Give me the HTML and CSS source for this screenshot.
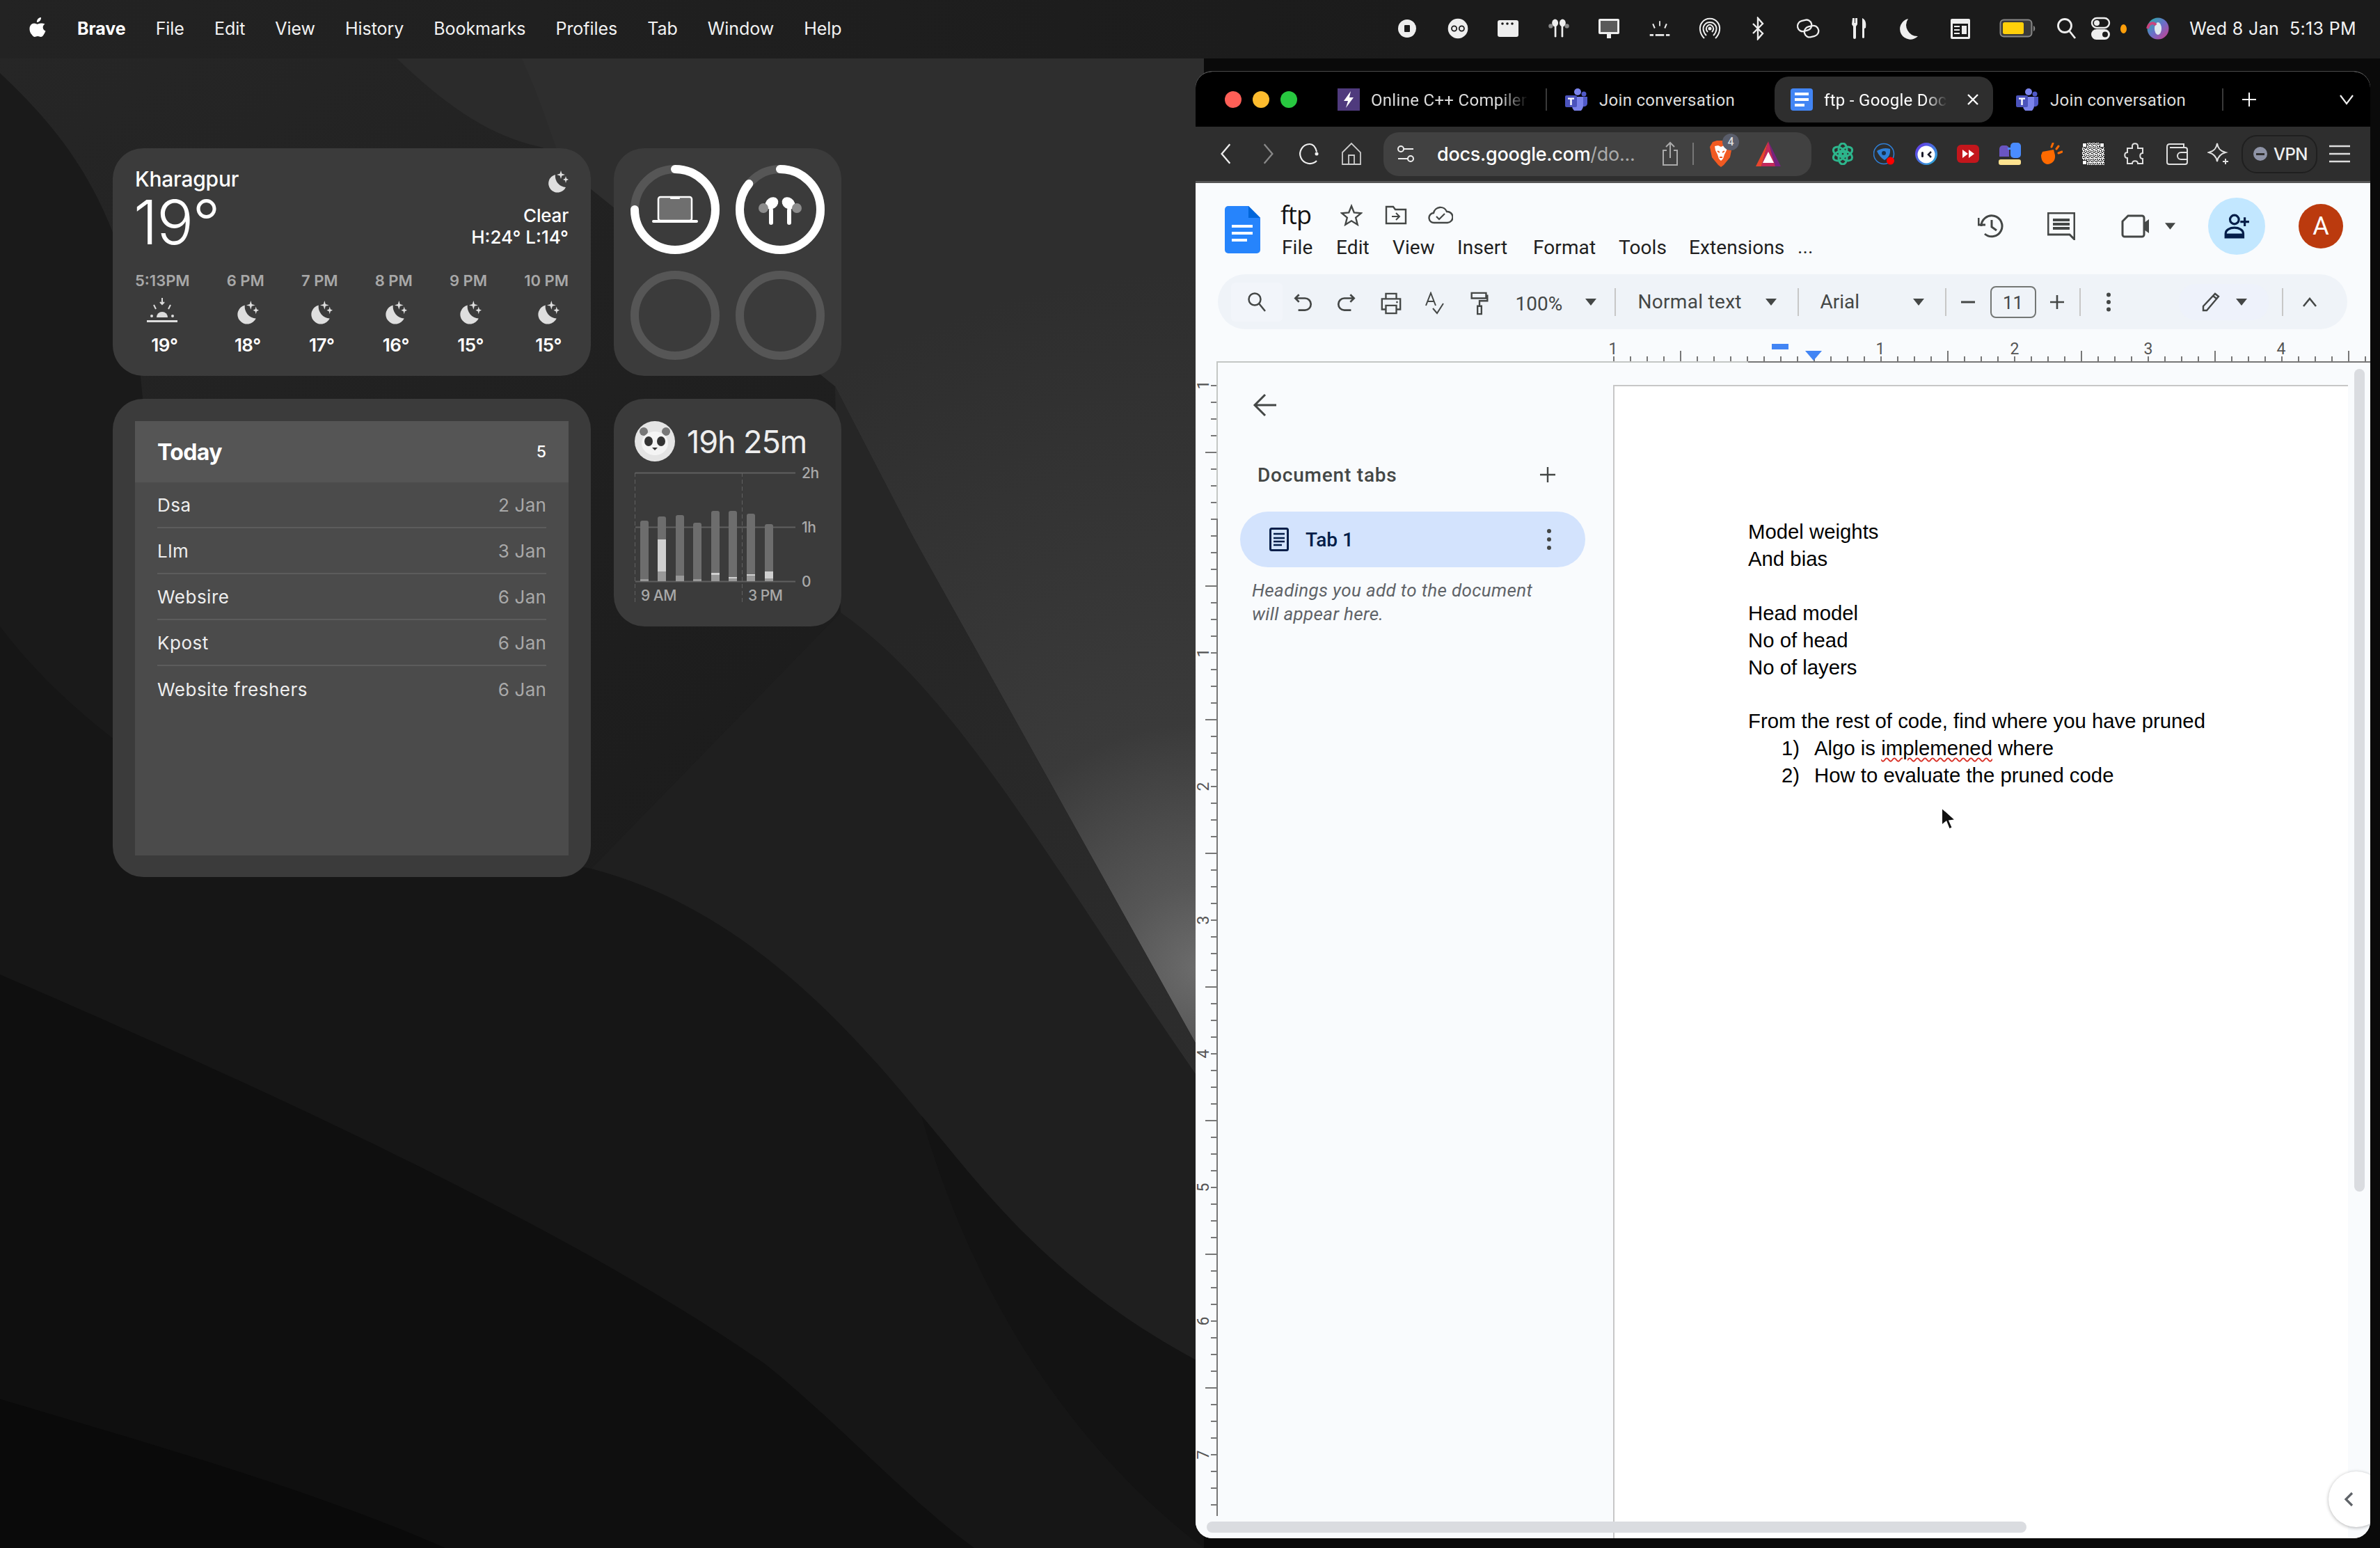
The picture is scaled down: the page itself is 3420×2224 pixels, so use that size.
FILE: index.html
```html
<!DOCTYPE html>
<html lang="en">
<head>
<meta charset="utf-8">
<title>Desktop</title>
<link rel="stylesheet" href="styles.css">
</head>
<body>
<svg class="defs" aria-hidden="true">
  <defs>
    <symbol id="moon" viewBox="0 0 32 32"><path d="M13 6A13 13 0 1 0 28 24 16 16 0 0 1 13 6Z" fill="#dedede"/><path d="M21 0l1.400 4.600L27 6l-4.600 1.400L21 12l-1.400-4.600L15 6l4.600-1.400zM28 8l1 3.500L32 13l-3 1.300L28 18l-1-3.700L24 13l3-1.500z" fill="#dedede"/></symbol>
    <symbol id="teams" viewBox="0 0 32 32"><circle cx="18" cy="5" r="5" fill="#7b83eb"/><circle cx="27" cy="8" r="3.500" fill="#5059c9"/><path d="M23 12h9v10a5 5 0 0 1-9 2z" fill="#5059c9"/><path d="M9 12h17v13a8 8 0 0 1-16 1z" fill="#7b83eb"/><rect y="10" width="17" height="17" rx="2" fill="#4b53bc"/><path d="M4 13.500h9v2.200h-3.300V24H7.300v-8.300H4z" fill="#fff"/></symbol>
    <symbol id="gdoc" viewBox="0 0 32 32"><rect width="32" height="32" rx="4" fill="#4285f4"/><path d="M6 6h20v4H6zM6 14h20v4H6zM6 22h14v4H6z" fill="#fff"/></symbol>
    <symbol id="arrowdn" viewBox="0 0 18 12"><path d="M1 1h16l-8 10z" fill="#444746"/></symbol>
  </defs>
</svg>
<div class="desktop">
  <svg class="wallpaper" viewBox="0 0 3420 2224" aria-hidden="true">
    <defs>
      <radialGradient id="glow" gradientUnits="userSpaceOnUse" cx="1725" cy="1390" r="1000"><stop offset="0" stop-color="#6c6c6c"/><stop offset=".12" stop-color="#565656"/><stop offset=".35" stop-color="#3a3a3a"/><stop offset="1" stop-color="#2e2e2e"/></radialGradient>
      <linearGradient id="mid" gradientUnits="userSpaceOnUse" x1="1300" y1="900" x2="1700" y2="1700"><stop offset="0" stop-color="#262626"/><stop offset="1" stop-color="#2e2e2e"/></linearGradient>
      <linearGradient id="upper" gradientUnits="userSpaceOnUse" x1="0" y1="84" x2="900" y2="1300"><stop offset="0" stop-color="#262626"/><stop offset="1" stop-color="#1c1c1c"/></linearGradient>
    </defs>
    <rect width="3420" height="2224" fill="#161616"/>
    <path d="M0 84H1730V1960C1500 1840 1400 1690 1324 1603 1200 1450 1050 1300 850 1248 600 1200 300 1100 0 900Z" fill="url(#upper)"/>
    <path d="M0 105C90 190 150 270 190 420L260 1130C150 1060 60 980 0 900Z" fill="#1a1a1a"/>
    <path d="M570 84C640 150 700 195 780 212L1230 560 1730 1000V84Z" fill="#2b2b2b"/>
    <path d="M750 84C780 150 790 190 810 240L1200 555 1313 773 1730 1520V84Z" fill="url(#glow)"/>
    <path d="M1208 880C1380 1000 1520 1260 1730 1560V1960C1500 1840 1400 1690 1324 1603 1200 1450 1050 1300 850 1248Z" fill="#1f1f1f"/>
    <path d="M1200 555L1313 773 1730 1520V1560C1520 1260 1380 1000 1208 880Z" fill="url(#mid)"/>
    <path d="M0 1400C300 1530 800 1750 1100 1960 1200 2040 1300 2150 1400 2224H0Z" fill="#0f0f0f"/>
    <path d="M0 2010C200 2070 450 2140 640 2224H0Z" fill="#0a0a0a"/>
    <path d="M1730 1960C1500 1840 1400 1690 1324 1603 1380 1800 1500 2050 1730 2224Z" fill="#131313"/>
    <rect x="1730" y="84" width="1690" height="2140" fill="#0a0a0a"/>
  </svg>

  <header class="menubar">
    <div class="menu-left">
      <svg class="apple" viewBox="0 0 24 30" aria-hidden="true"><path d="M17 1c.2 2-.6 3.700-1.700 5-1.100 1.200-2.800 2.100-4.400 2-.2-1.900.7-3.800 1.700-4.900C13.800 1.800 15.600.900 17 1zM22.500 10.600c-1.900 1.200-2.900 2.900-2.800 5 .1 2.400 1.500 4.100 3.800 5-.7 2-1.600 3.800-2.800 5.500-1.200 1.700-2.300 3-4.100 3-1.700 0-2.300-1-4.400-1-2 0-2.700 1-4.300 1-1.700 0-3-1.500-4.200-3.300C1.500 23.400.300 20 .500 16.900c.2-4.300 3-7.300 6.600-7.400 1.900 0 3.300 1.200 4.600 1.200 1.200 0 2.900-1.400 5.200-1.200 2.200.1 4.200 0 5.600 1.100z" fill="#fff"/></svg>
      <strong class="menu-app">Brave</strong>
      <span>File</span><span>Edit</span><span>View</span><span>History</span><span>Bookmarks</span><span>Profiles</span><span>Tab</span><span>Window</span><span>Help</span>
    </div>
    <div class="menu-right">
      <svg class="st" viewBox="0 0 34 34" aria-hidden="true"><circle cx="17" cy="17" r="13" fill="#eee"/><rect x="13" y="12" width="8" height="10" rx="1" fill="#1b1b1b"/></svg>
      <svg class="st" viewBox="0 0 38 34" aria-hidden="true"><ellipse cx="19" cy="17" rx="16" ry="16" fill="#eee"/><circle cx="13" cy="17" r="4" fill="none" stroke="#1b1b1b" stroke-width="2"/><circle cx="25" cy="17" r="4" fill="none" stroke="#1b1b1b" stroke-width="2"/></svg>
      <svg class="st" viewBox="0 0 34 34" aria-hidden="true"><rect x="2" y="5" width="30" height="24" rx="3" fill="#eee"/><circle cx="9" cy="10" r="1.800" fill="#1b1b1b"/><circle cx="16" cy="10" r="1.800" fill="#1b1b1b"/><circle cx="23" cy="10" r="1.800" fill="#1b1b1b"/></svg>
      <svg class="st" viewBox="0 0 38 34" aria-hidden="true"><g fill="#eee"><ellipse cx="13" cy="8" rx="5" ry="6"/><ellipse cx="25" cy="8" rx="5" ry="6"/><rect x="12" y="12" width="3" height="19" rx="1.500"/><rect x="23" y="12" width="3" height="19" rx="1.500"/></g><circle cx="6" cy="13" r="3.500" fill="#888"/><circle cx="32" cy="13" r="3.500" fill="#888"/></svg>
      <svg class="st" viewBox="0 0 34 34" aria-hidden="true"><rect x="2" y="3" width="30" height="22" rx="2" fill="#eee"/><rect x="5" y="6" width="24" height="16" fill="#5a5a5a"/><rect x="14" y="25" width="6" height="6" fill="#eee"/></svg>
      <svg class="st" viewBox="0 0 38 34" aria-hidden="true"><g fill="#eee"><rect x="3" y="26" width="6" height="3"/><rect x="12" y="26" width="14" height="3"/><rect x="29" y="26" width="6" height="3"/><rect x="18" y="5" width="2" height="8"/><path d="M7 10l2-1 3 7-2 1zM31 10l-2-1-3 7 2 1z"/></g></svg>
      <svg class="st st-air" viewBox="0 0 34 34" fill="none" stroke="#eee" stroke-width="2" aria-hidden="true"><path d="M9 31C2 24 1 14 6 8c5-7 17-7 22 0 5 6 4 16-3 23"/><path d="M12 27C7 22 6 15 10 11c3-4 11-4 14 0 4 4 3 11-2 16"/><path d="M14 22c-3-3-3-7 0-9 2-2 4-2 6 0 3 2 3 6 0 9"/><circle cx="17" cy="17" r="1.500" fill="#eee"/></svg>
      <svg class="st" viewBox="0 0 34 34" fill="none" stroke="#eee" stroke-width="2.400" aria-hidden="true"><path d="M10 10l14 14-7 8V2l7 8-14 14"/></svg>
      <svg class="st" viewBox="0 0 38 34" fill="none" stroke="#eee" stroke-width="2.600" aria-hidden="true"><rect x="2" y="4" width="23" height="17" rx="8.500" transform="rotate(-15 13 12)"/><rect x="13" y="13" width="23" height="17" rx="8.500" transform="rotate(-15 25 21)"/></svg>
      <svg class="st st-fork" viewBox="0 0 34 34" fill="#eee" aria-hidden="true"><path d="M7 2h3v7h1V2h3v9l-2 3v16a2 2 0 0 1-4 0V14l-2-3zM21 2c5 2 6 8 5 14l-2 1v13a2 2 0 0 1-3 0z" transform="translate(1 0)"/></svg>
      <svg class="st" viewBox="0 0 34 34" aria-hidden="true"><path d="M14 3A15 15 0 1 0 28 28 16 16 0 0 1 14 3Z" fill="#eee"/></svg>
      <svg class="st" viewBox="0 0 34 34" aria-hidden="true"><rect x="3" y="3" width="28" height="29" rx="2" fill="#eee"/><rect x="6" y="10" width="22" height="19" fill="#1b1b1b"/><g fill="#eee"><circle cx="7" cy="6.500" r="1"/><circle cx="11" cy="6.500" r="1"/><circle cx="15" cy="6.500" r="1"/><rect x="8" y="13" width="8" height="2"/><rect x="8" y="18" width="8" height="2"/><rect x="8" y="23" width="8" height="2"/><rect x="19" y="13" width="7" height="12"/></g></svg>
      <svg class="st st-batt" viewBox="0 0 54 34" aria-hidden="true"><rect x="1.500" y="4.500" width="45" height="24" rx="5" fill="#3a3a3a" stroke="#888" stroke-width="2"/><rect x="5" y="8" width="30" height="17" rx="2.500" fill="#ffd00a"/><path d="M49 13c3 1 3 7 0 8z" fill="#888"/></svg>
      <svg class="st st-find" viewBox="0 0 34 34" fill="none" stroke="#eee" stroke-width="2.800" aria-hidden="true"><circle cx="14" cy="13" r="9.500"/><path d="M21 21l8 10"/></svg>
      <svg class="st" viewBox="0 0 34 34" aria-hidden="true"><rect x="5" y="2" width="25" height="14" rx="7" fill="none" stroke="#eee" stroke-width="2.400"/><circle cx="12" cy="9" r="4" fill="#eee"/><rect x="4" y="18" width="27" height="15" rx="7.500" fill="#eee"/><circle cx="24" cy="25.500" r="4" fill="#1b1b1b"/></svg>
      <i class="orange-dot"></i>
      <svg class="st st-siri" viewBox="0 0 34 34" aria-hidden="true"><defs><linearGradient id="siri" x1="0" y1="0" x2="1" y2="1"><stop offset="0" stop-color="#1fb7a5"/><stop offset=".5" stop-color="#6a6fc9"/><stop offset="1" stop-color="#d13a8a"/></linearGradient></defs><circle cx="17" cy="17" r="15.500" fill="url(#siri)"/><ellipse cx="17" cy="17" rx="5" ry="9" fill="#dfe9ef"/><path d="M2 17C4 9 10 7 14 12" stroke="#c8447e" stroke-width="4" fill="none"/></svg>
      <span class="clock">Wed 8 Jan&nbsp;&nbsp;5:13 PM</span>
    </div>
  </header>

  <section class="widgets">
    <article class="widget weather">
      <div class="wx-head">
        <div class="wx-left">
          <div class="wx-city">Kharagpur</div>
          <div class="wx-temp">19°</div>
        </div>
        <div class="wx-right">
          <svg class="wx-moon" aria-hidden="true"><use href="#moon"/></svg>
          <div class="wx-clear">Clear</div>
          <div class="wx-hl">H:24° L:14°</div>
        </div>
      </div>
      <div class="wx-hours">
        <div class="wx-col wx-first"><span class="wx-time">5:13PM</span>
          <svg class="wx-ico" viewBox="0 0 44 40" aria-hidden="true"><g fill="none" stroke="#ddd" stroke-width="2"><path d="M22 0v9M19 6l3 3 3-3M10 10l3 6M34 10l-3 6"/></g><path d="M14 28a8 8 0 0 1 16 0z" fill="#ddd"/><circle cx="7" cy="26" r="2" fill="#ddd"/><circle cx="37" cy="26" r="2" fill="#ddd"/><rect x="0" y="32" width="44" height="3" fill="#ddd"/></svg>
          <span class="wx-deg">19°</span></div>
        <div class="wx-col"><span class="wx-time">6 PM</span><svg class="wx-ico" aria-hidden="true"><use href="#moon"/></svg><span class="wx-deg">18°</span></div>
        <div class="wx-col"><span class="wx-time">7 PM</span><svg class="wx-ico" aria-hidden="true"><use href="#moon"/></svg><span class="wx-deg">17°</span></div>
        <div class="wx-col"><span class="wx-time">8 PM</span><svg class="wx-ico" aria-hidden="true"><use href="#moon"/></svg><span class="wx-deg">16°</span></div>
        <div class="wx-col"><span class="wx-time">9 PM</span><svg class="wx-ico" aria-hidden="true"><use href="#moon"/></svg><span class="wx-deg">15°</span></div>
        <div class="wx-col"><span class="wx-time">10 PM</span><svg class="wx-ico" aria-hidden="true"><use href="#moon"/></svg><span class="wx-deg">15°</span></div>
      </div>
    </article>

    <article class="widget batteries">
      <svg class="ring" viewBox="0 0 128 128" aria-hidden="true">
        <circle class="ring-track" cx="64" cy="64" r="58"/>
        <circle class="ring-fill" cx="64" cy="64" r="58" pathLength="100" stroke-dasharray="75 100" transform="rotate(-90 64 64)"/>
        <rect x="40" y="46" width="48" height="34" rx="3" fill="#6f6f6f" stroke="#fff" stroke-width="2.500"/>
        <rect x="57" y="46" width="14" height="3" rx="1" fill="#fff"/>
        <rect x="31" y="79" width="66" height="4" rx="2" fill="#fff"/>
      </svg>
      <svg class="ring" viewBox="0 0 128 128" aria-hidden="true">
        <circle class="ring-track" cx="64" cy="64" r="58"/>
        <circle class="ring-fill" cx="64" cy="64" r="58" pathLength="100" stroke-dasharray="86 100" transform="rotate(-90 64 64)"/>
        <g fill="#fff"><ellipse cx="52" cy="55" rx="10" ry="8" transform="rotate(-35 52 55)"/><ellipse cx="76" cy="55" rx="10" ry="8" transform="rotate(35 76 55)"/><rect x="48" y="62" width="6" height="24" rx="3"/><rect x="74" y="62" width="6" height="24" rx="3"/></g>
        <circle cx="40" cy="62" r="7" fill="#8c8c8c"/><circle cx="88" cy="62" r="7" fill="#8c8c8c"/>
      </svg>
      <svg class="ring" viewBox="0 0 128 128" aria-hidden="true"><circle class="ring-track" cx="64" cy="64" r="58"/></svg>
      <svg class="ring" viewBox="0 0 128 128" aria-hidden="true"><circle class="ring-track" cx="64" cy="64" r="58"/></svg>
    </article>

    <article class="widget reminders">
      <div class="rem-panel">
        <div class="rem-head"><strong>Today</strong><span>5</span></div>
        <ul class="rem-list">
          <li><span>Dsa</span><time>2 Jan</time></li>
          <li><span>Llm</span><time>3 Jan</time></li>
          <li><span>Websire</span><time>6 Jan</time></li>
          <li><span>Kpost</span><time>6 Jan</time></li>
          <li><span>Website freshers</span><time>6 Jan</time></li>
        </ul>
      </div>
    </article>

    <article class="widget timing">
      <div class="tm-head">
        <svg class="panda" viewBox="0 0 58 58" aria-hidden="true"><circle cx="29" cy="29" r="29" fill="#e4e4e4"/><circle cx="13" cy="15" r="6" fill="#777"/><circle cx="45" cy="15" r="6" fill="#777"/><ellipse cx="29" cy="32" rx="19" ry="17" fill="#f4f4f4"/><ellipse cx="20" cy="29" rx="6" ry="7" fill="#333"/><ellipse cx="38" cy="29" rx="6" ry="7" fill="#333"/><path d="M25 38h8l-4 4z" fill="#333"/></svg>
        <span class="tm-total">19h 25m</span>
      </div>
      <svg class="chart" viewBox="0 0 327 215" aria-hidden="true">
        <g class="grid"><path d="M31 16.500H261M31 94.500H261M31 172.500H261"/><path class="dash" d="M30.500 16V202M184.500 16V202"/></g>
        <g class="bar"><rect x="38" y="85" width="12" height="87" rx="3"/><rect x="63" y="79" width="12" height="93" rx="3"/><rect x="89" y="77" width="12" height="95" rx="3"/><rect x="114" y="88" width="12" height="84" rx="3"/><rect x="140" y="71" width="12" height="101" rx="3"/><rect x="165" y="71" width="12" height="101" rx="3"/><rect x="191" y="75" width="12" height="97" rx="3"/><rect x="217" y="90" width="12" height="82" rx="3"/></g>
        <g class="bar-mid"><rect x="38" y="169" width="12" height="3"/><rect x="63" y="158" width="12" height="14"/><rect x="89" y="164" width="12" height="8"/><rect x="114" y="169" width="12" height="3"/><rect x="140" y="163" width="12" height="9"/><rect x="165" y="168" width="12" height="4"/><rect x="191" y="164" width="12" height="8"/><rect x="217" y="168" width="12" height="4"/></g>
        <g class="bar-hi"><rect x="63" y="112" width="12" height="46"/><rect x="140" y="160" width="12" height="3"/><rect x="165" y="166" width="12" height="2"/><rect x="191" y="162" width="12" height="2"/><rect x="217" y="158" width="12" height="10"/></g>
        <g class="chart-txt"><text x="270" y="24">2h</text><text x="270" y="102">1h</text><text x="270" y="180">0</text><text x="39" y="200">9 AM</text><text x="193" y="200">3 PM</text></g>
      </svg>
    </article>
  </section>

  <main class="window">
    <div class="tabstrip">
      <div class="lights"><i class="red"></i><i class="amber"></i><i class="green"></i></div>
      <div class="tab tab-one">
        <svg class="fav" viewBox="0 0 32 32" aria-hidden="true"><rect width="32" height="32" fill="#4f3a7d"/><path d="M19 4L9 18h6l-3 10 11-15h-6z" fill="#fff"/></svg>
        <span class="tab-title">Online C++ Compiler</span>
      </div>
      <i class="tab-sep"></i>
      <div class="tab tab-two">
        <svg class="fav" aria-hidden="true"><use href="#teams"/></svg>
        <span class="tab-plain">Join conversation</span>
      </div>
      <div class="tab tab-active">
        <svg class="fav" aria-hidden="true"><use href="#gdoc"/></svg>
        <span class="tab-title active-title">ftp - Google Docs</span>
        <svg class="tab-x" viewBox="0 0 20 20" aria-hidden="true"><path d="M3 3l14 14M17 3L3 17" stroke="#fff" stroke-width="2.400"/></svg>
      </div>
      <div class="tab tab-four">
        <svg class="fav" aria-hidden="true"><use href="#teams"/></svg>
        <span class="tab-plain">Join conversation</span>
      </div>
      <i class="tab-sep tab-sep-2"></i>
      <svg class="tab-plus" viewBox="0 0 24 24" aria-hidden="true"><path d="M12 2v20M2 12h20" stroke="#fff" stroke-width="2"/></svg>
      <svg class="tab-more" viewBox="0 0 24 16" aria-hidden="true"><path d="M3 2l9 12 9-12" fill="none" stroke="#eee" stroke-width="2.200"/></svg>
    </div>

    <div class="navbar">
      <div class="nav-slot"><svg viewBox="0 0 24 32" aria-hidden="true"><path d="M17 3L6 16l11 13" class="nv"/></svg></div>
      <div class="nav-slot"><svg viewBox="0 0 24 32" aria-hidden="true"><path d="M7 3l11 13L7 29" class="nv nv-dim"/></svg></div>
      <div class="nav-slot"><svg viewBox="0 0 34 34" aria-hidden="true"><path d="M17 3A14 14 0 1 0 27 27" class="nv"/><circle cx="27" cy="17" r="2.500" fill="#eee"/><path d="M17 3C22 3 25 6 27 14" class="nv"/></svg></div>
      <div class="nav-slot"><svg viewBox="0 0 34 34" aria-hidden="true"><path d="M4 15L17 2l13 13v17H4zM13 32V19h8v13" class="nv nv-thin"/></svg></div>
      <div class="urlbar">
        <svg class="url-tune" viewBox="0 0 28 30" aria-hidden="true"><g fill="none" stroke="#eee" stroke-width="2"><circle cx="7" cy="8" r="4"/><path d="M11 8h14M3 22h14"/><circle cx="21" cy="22" r="4"/></g></svg>
        <span class="url-text"><b>docs.google.com</b>/do...</span>
        <svg class="url-share" viewBox="0 0 26 36" aria-hidden="true"><path d="M8 13H3v21h20V13h-5M13 24V2M7 8l6-6 6 6" fill="none" stroke="#aaa" stroke-width="2"/></svg>
        <i class="url-sep"></i>
        <div class="brave">
          <svg viewBox="0 0 34 40" aria-hidden="true"><path d="M5 3l6-2h12l6 2 4 7-3 15-9 11-4 3-4-3-9-11L1 10z" fill="#f15a22"/><path d="M8 9l5-1 4 2 4-2 5 1-1 6-3 6-2 6-3 3-3-3-2-6-3-6z" fill="#fff"/><path d="M12 16l3 2M22 16l-3 2M15 25h4" stroke="#f15a22" stroke-width="2"/></svg>
          <b class="brave-badge">4</b>
        </div>
        <svg class="url-tri" viewBox="0 0 36 36" aria-hidden="true"><path d="M18 0L0 36h8z" fill="#e8452c"/><path d="M18 0l18 36h-8z" fill="#76227f"/><path d="M18 0L8 36h20z" fill="#c3285c"/><path d="M18 15L10 31h16z" fill="#fff"/></svg>
      </div>
      <div class="exts">
        <div class="ext"><svg viewBox="0 0 32 32" fill="none" stroke="#2db58c" stroke-width="3" aria-hidden="true"><ellipse cx="16" cy="10" rx="6" ry="9"/><ellipse cx="16" cy="10" rx="6" ry="9" transform="rotate(60 16 16)"/><ellipse cx="16" cy="10" rx="6" ry="9" transform="rotate(120 16 16)"/><ellipse cx="16" cy="10" rx="6" ry="9" transform="rotate(180 16 16)"/><ellipse cx="16" cy="10" rx="6" ry="9" transform="rotate(240 16 16)"/><ellipse cx="16" cy="10" rx="6" ry="9" transform="rotate(300 16 16)"/></svg></div>
        <div class="ext"><svg viewBox="0 0 32 32" aria-hidden="true"><circle cx="15" cy="16" r="14.500" fill="none" stroke="#2f7fd6" stroke-width="1.600"/><path d="M5 12c6-4 13-5 19-3 1 8-3 13-8 16-5-3-9-8-11-13z" fill="#2f7fd6"/><circle cx="15" cy="15" r="3" fill="#17314f"/><circle cx="24.500" cy="26" r="5.500" fill="#f00"/></svg></div>
        <div class="ext"><svg viewBox="0 0 32 32" aria-hidden="true"><defs><linearGradient id="fc" x1="0" y1="0" x2="1" y2="1"><stop offset="0" stop-color="#6a2ee8"/><stop offset="1" stop-color="#27b5d6"/></linearGradient></defs><circle cx="16" cy="16" r="16" fill="url(#fc)"/><circle cx="16" cy="17" r="12.500" fill="#fff"/><rect x="9" y="13" width="3" height="8" rx="1.500" fill="#1a1a2a"/><path d="M23 13l-4 4 4 4" fill="none" stroke="#1a1a2a" stroke-width="2.500"/></svg></div>
        <div class="ext"><svg viewBox="0 0 32 32" aria-hidden="true"><rect y="3" width="32" height="26" rx="6" fill="#c3161c"/><path d="M8 10l8 6-8 6zM17 10l8 6-8 6z" fill="#fff"/></svg></div>
        <div class="ext"><svg viewBox="0 0 32 32" aria-hidden="true"><path d="M15 16H1V5a5 5 0 0 1 5-5h4a5 5 0 0 1 5 5z" fill="#6a55c2" transform="translate(0 4)"/><rect x="17" width="15" height="22" rx="5" fill="#4a8cff"/><rect x="13" y="7" width="6" height="3" fill="#4a8cff"/><rect y="24" width="32" height="8" rx="3" fill="#fde28f"/></svg></div>
        <div class="ext"><svg viewBox="0 0 32 32" aria-hidden="true"><path d="M3 13l16-3 2 8c1 8-5 13-11 13-6-1-9-6-9-13z" fill="#ff6a00"/><path d="M16 6l2-5M23 9l3-4M26 15l5-2" stroke="#ff6a00" stroke-width="3" stroke-linecap="round"/></svg></div>
        <div class="ext"><svg viewBox="0 0 32 32" class="qr" aria-hidden="true"><defs><pattern id="qrp" width="6" height="6" patternUnits="userSpaceOnUse"><rect width="6" height="6" fill="#fff"/><path d="M0 0h2v1H0zM3 0h1v2H3zM5 1h1v2H5zM1 2h1v2H1zM2 3h2v1H2zM0 5h1v1H0zM3 5h2v1H3zM4 2h1v1H4z" fill="#222"/></pattern></defs><rect width="32" height="32" fill="url(#qrp)"/><g fill="#fff" stroke="#222"><rect x=".5" y=".5" width="6" height="6"/><rect x="25.500" y=".5" width="6" height="6"/><rect x=".5" y="25.500" width="6" height="6"/></g></svg></div>
        <div class="ext"><svg viewBox="0 0 32 32" fill="none" stroke="#e0e0e0" stroke-width="2" aria-hidden="true"><path d="M12 5c0-5 8-5 8 0v3h7v7c-5 0-5 8 0 8v7h-7c0-5-8-5-8 0H5v-8c-5 0-5-8 0-8V8h7z"/></svg></div>
        <div class="ext"><svg viewBox="0 0 32 32" fill="none" stroke="#e0e0e0" stroke-width="2" aria-hidden="true"><path d="M2 6c0-3 2-4 4-4h20v5M2 6v22c0 2 1 3 3 3h23c2 0 3-1 3-3V10c0-2-1-3-3-3H6"/><path d="M31 14h-9a5 5 0 0 0 0 10h9"/></svg></div>
        <div class="ext"><svg viewBox="0 0 32 32" fill="none" stroke="#e0e0e0" stroke-width="2" aria-hidden="true"><path d="M14 1c1 7 4 11 12 13-7 2-11 6-12 13-1-7-5-11-12-13 8-2 11-6 12-13z"/><path d="M26 23v8M22 27h8"/></svg></div>
      </div>
      <div class="vpn"><i class="vpn-dot"></i><span>VPN</span></div>
      <svg class="burger" viewBox="0 0 30 26" aria-hidden="true"><path d="M0 2h30M0 13h30M0 24h30" stroke="#ddd" stroke-width="2.400"/></svg>
    </div>

    <div class="docs">
      <div class="docs-head">
        <svg class="doc-logo" viewBox="0 0 51 68" aria-hidden="true"><path d="M0 5a5 5 0 0 1 5-5h29l17 17v46a5 5 0 0 1-5 5H5a5 5 0 0 1-5-5z" fill="#2684fc"/><path d="M34 0l17 17H34z" fill="#0066da"/><path d="M10 27h30v4H10zM10 37h30v4H10zM10 47h22v4H10z" fill="#fff"/></svg>
        <div class="doc-titles">
          <div class="doc-title-row">
            <span class="doc-name">ftp</span>
            <svg class="ti ti-star" viewBox="0 0 32 32" aria-hidden="true"><path d="M16 3l3.800 9.400 10.200.8-7.800 6.500 2.500 10L16 24.300 7.300 29.700l2.500-10L2 13.200l10.200-.8z" fill="none" stroke="#444746" stroke-width="2.400"/></svg>
            <svg class="ti ti-folder" viewBox="0 0 32 32" aria-hidden="true"><path d="M2 4h10l3 4h15v20H2z" fill="none" stroke="#444746" stroke-width="2.400"/><path d="M10 18h10M16 13l5 5-5 5" fill="none" stroke="#444746" stroke-width="2"/></svg>
            <svg class="ti ti-cloud" viewBox="0 0 36 32" aria-hidden="true"><path d="M9 27a7 7 0 0 1-1-14A10 10 0 0 1 27 11a8 8 0 0 1 1 16z" fill="none" stroke="#444746" stroke-width="2.400"/><path d="M12 18l4 4 8-8" fill="none" stroke="#444746" stroke-width="2.200"/></svg>
          </div>
          <nav class="doc-menu"><span>File</span><span>Edit</span><span>View</span><span>Insert</span><span>Format</span><span>Tools</span><span>Extensions</span><span class="doc-ell">...</span></nav>
        </div>
        <div class="doc-actions">
          <svg class="da da-hist" viewBox="0 0 40 40" aria-hidden="true"><path d="M5 20a15 15 0 1 1 5 11" fill="none" stroke="#444746" stroke-width="3"/><path d="M1 8v10h10" fill="none" stroke="#444746" stroke-width="3"/><path d="M20 11v10l7 5" fill="none" stroke="#444746" stroke-width="3"/></svg>
          <svg class="da da-cmt" viewBox="0 0 40 40" aria-hidden="true"><path d="M1 1h38v38l-7-7H1z" fill="none" stroke="#444746" stroke-width="3"/><path d="M8 9h24v4H8zM8 15h24v4H8zM8 21h24v4H8z" fill="#444746"/></svg>
          <svg class="da da-cam" viewBox="0 0 44 34" aria-hidden="true"><path d="M10 2h20a3 3 0 0 1 3 3v24a3 3 0 0 1-3 3H5a3 3 0 0 1-3-3V10z" fill="none" stroke="#444746" stroke-width="3"/><path d="M33 12l7-5v20l-7-5z" fill="#444746"/></svg>
          <svg class="da-arrow" aria-hidden="true"><use href="#arrowdn"/></svg>
          <div class="share-btn"><svg viewBox="0 0 36 36" aria-hidden="true"><circle cx="15" cy="9" r="6" fill="none" stroke="#041e49" stroke-width="3"/><path d="M3 33v-5c0-5 6-8 12-8s12 3 12 8v5z" fill="none" stroke="#041e49" stroke-width="3"/><path d="M3 28h24v5H3z" fill="#041e49"/><path d="M29 6v12M23 12h12" stroke="#041e49" stroke-width="3"/></svg></div>
          <div class="avatar">A</div>
        </div>
      </div>

      <div class="toolbar">
        <div class="tb-search"><svg viewBox="0 0 30 30" aria-hidden="true"><circle cx="12" cy="11" r="8.500" class="ts"/><path d="M18 17l9 11" class="ts"/></svg></div>
        <div class="tb-slot tb-first"><svg viewBox="0 0 30 30" aria-hidden="true"><path d="M10 3L5 8l5 5M5 8h13a6.500 6.500 0 0 1 0 16H9" class="ts"/></svg></div>
        <div class="tb-slot"><svg viewBox="0 0 30 30" aria-hidden="true"><path d="M20 3l5 5-5 5M25 8H12a6.500 6.500 0 0 0 0 16h9" class="ts"/></svg></div>
        <div class="tb-slot"><svg viewBox="0 0 34 34" aria-hidden="true"><path d="M9 10V2h16v8M9 26H3V10h28v16h-6M9 20h16v12H9z" class="ts"/><circle cx="26" cy="15" r="1.500" fill="#444746"/></svg></div>
        <div class="tb-slot"><svg viewBox="0 0 30 34" aria-hidden="true"><path d="M2 20L9 2l7 18M4.500 14h9M12 24l6 7L27 17" class="ts ts-thin"/></svg></div>
        <div class="tb-slot"><svg viewBox="0 0 30 36" aria-hidden="true"><path d="M3 2h22v8H3zM25 6h2v8H15v8M12 22h6v12h-6z" class="ts"/></svg></div>
        <span class="tb-zoom">100%</span><svg class="tb-arrow tb-a1" aria-hidden="true"><use href="#arrowdn"/></svg>
        <i class="tb-sep tb-s1"></i>
        <span class="tb-style">Normal text</span><svg class="tb-arrow tb-a2" aria-hidden="true"><use href="#arrowdn"/></svg>
        <i class="tb-sep tb-s2"></i>
        <span class="tb-font">Arial</span><svg class="tb-arrow" aria-hidden="true"><use href="#arrowdn"/></svg>
        <i class="tb-sep tb-s3"></i>
        <svg class="tb-minus" viewBox="0 0 20 20" aria-hidden="true"><path d="M0 10h20" stroke="#444746" stroke-width="3"/></svg>
        <span class="tb-size">11</span>
        <svg class="tb-plus" viewBox="0 0 20 20" aria-hidden="true"><path d="M0 10h20M10 0v20" stroke="#444746" stroke-width="2.600"/></svg>
        <i class="tb-sep tb-s4"></i>
        <svg class="tb-dots" viewBox="0 0 8 28" aria-hidden="true"><circle cx="4" cy="3.500" r="3" fill="#444746"/><circle cx="4" cy="14" r="3" fill="#444746"/><circle cx="4" cy="24.500" r="3" fill="#444746"/></svg>
        <div class="tb-mode"><svg viewBox="0 0 30 30" aria-hidden="true"><path d="M3 27v-6L20 3l5 4L8 27zM17 6l5 4" fill="none" stroke="#444746" stroke-width="2.400"/></svg><svg class="tb-arrow tb-a3" aria-hidden="true"><use href="#arrowdn"/></svg></div>
        <i class="tb-sep tb-s5"></i>
        <svg class="tb-up" viewBox="0 0 22 16" aria-hidden="true"><path d="M2 14l9-11 9 11" fill="none" stroke="#444746" stroke-width="2.600"/></svg>
      </div>

      <svg class="hruler" viewBox="0 0 1688 48" aria-hidden="true">
        <defs><pattern id="ht" x="600" y="0" width="192" height="48" patternUnits="userSpaceOnUse"><g fill="#777"><rect x="0" y="39" width="2" height="8"/><rect x="24" y="39" width="2" height="8"/><rect x="48" y="39" width="2" height="8"/><rect x="72" y="39" width="2" height="8"/><rect x="96" y="31" width="2" height="16"/><rect x="120" y="39" width="2" height="8"/><rect x="144" y="39" width="2" height="8"/><rect x="168" y="39" width="2" height="8"/></g></pattern></defs>
        <rect x="600" width="1088" height="48" fill="url(#ht)"/>
        <rect x="30" y="46" width="764" height="2" fill="#c4c7c5"/><rect x="794" y="46" width="894" height="2" fill="#777"/>
        <g class="ruler-num"><text x="600" y="36">1</text><text x="984" y="36">1</text><text x="1177" y="36">2</text><text x="1369" y="36">3</text><text x="1560" y="36">4</text></g>
        <rect x="828" y="21" width="24" height="8" fill="#4285f4"/><path d="M876 31h24l-12 14z" fill="#4285f4"/>
      </svg>

      <div class="docs-body">
        <svg class="vruler" viewBox="0 0 32 1657" aria-hidden="true">
          <defs><pattern id="vt" x="0" y="32" width="32" height="192" patternUnits="userSpaceOnUse"><g fill="#777"><rect x="22" y="0" width="8" height="2"/><rect x="22" y="24" width="8" height="2"/><rect x="22" y="48" width="8" height="2"/><rect x="22" y="72" width="8" height="2"/><rect x="14" y="96" width="16" height="2"/><rect x="22" y="120" width="8" height="2"/><rect x="22" y="144" width="8" height="2"/><rect x="22" y="168" width="8" height="2"/></g></pattern></defs>
          <rect y="32" width="32" height="1625" fill="url(#vt)"/>
          <rect x="30" width="2" height="224" fill="#c4c7c5"/><rect x="30" y="224" width="2" height="1433" fill="#777"/>
          <g class="ruler-num">
            <text transform="translate(19 32) rotate(-90)">1</text><text transform="translate(19 417) rotate(-90)">1</text><text transform="translate(19 609) rotate(-90)">2</text><text transform="translate(19 801) rotate(-90)">3</text><text transform="translate(19 993) rotate(-90)">4</text><text transform="translate(19 1185) rotate(-90)">5</text><text transform="translate(19 1377) rotate(-90)">6</text><text transform="translate(19 1569) rotate(-90)">7</text>
          </g>
        </svg>
        <aside class="outline">
          <svg class="ol-back" viewBox="0 0 36 40" aria-hidden="true"><path d="M34 20H4M18 5L3 20l15 15" fill="none" stroke="#444746" stroke-width="3"/></svg>
          <div class="ol-head"><span>Document tabs</span><svg viewBox="0 0 22 22" aria-hidden="true"><path d="M0 11h22M11 0v22" stroke="#444746" stroke-width="2.400"/></svg></div>
          <div class="ol-tab">
            <svg class="ol-tab-ico" viewBox="0 0 28 34" aria-hidden="true"><rect x="1.500" y="1.500" width="25" height="31" rx="2" fill="none" stroke="#041e49" stroke-width="3"/><path d="M6 9h16M6 15h16M6 25h12M6 20h16" stroke="#041e49" stroke-width="2.400"/></svg>
            <span class="ol-tab-name">Tab 1</span>
            <svg class="ol-tab-dots" viewBox="0 0 8 32" aria-hidden="true"><circle cx="4" cy="4" r="3" fill="#444746"/><circle cx="4" cy="16" r="3" fill="#444746"/><circle cx="4" cy="28" r="3" fill="#444746"/></svg>
          </div>
          <p class="ol-note">Headings you add to the document will appear here.</p>
        </aside>
        <article class="page">
          <p>Model weights</p>
          <p>And bias</p>
          <p class="blank">&nbsp;</p>
          <p>Head model</p>
          <p>No of head</p>
          <p>No of layers</p>
          <p class="blank">&nbsp;</p>
          <p>From the rest of code, find where you have pruned</p>
          <ol class="page-list">
            <li><span class="num">1)</span>Algo is <span class="typo">implemened</span> where</li>
            <li><span class="num">2)</span>How to evaluate the pruned code</li>
          </ol>
          <svg class="cursor" viewBox="0 0 22 32" aria-hidden="true"><path d="M2 1v23l6-5 4 10 4-2-4-9 8-1z" fill="#111" stroke="#fff" stroke-width="1.500"/></svg>
        </article>
      </div>
      <div class="docs-foot"></div>
      <i class="vscroll"></i>
      <i class="hscroll"></i>
      <div class="collapse"><svg viewBox="0 0 14 22" aria-hidden="true"><path d="M12 2L3 11l9 9" fill="none" stroke="#5f6368" stroke-width="3.200"/></svg></div>
    </div>
  </main>
</div>
</body>
</html>
```

FILE: styles.css
```css
* { box-sizing: border-box; }
html, body { margin: 0; padding: 0; background: #0a0a0a; }
body { font-family: "Inter", "Liberation Sans", sans-serif; }
.defs { position: absolute; width: 0; height: 0; }
svg { display: block; }
.desktop { position: relative; width: 3420px; height: 2224px; overflow: hidden; }
.wallpaper { position: absolute; inset: 0; width: 3420px; height: 2224px; }

/* menu bar */
.menubar { position: relative; height: 84px; display: flex; justify-content: space-between; align-items: center; background: linear-gradient(90deg, #232323, #1b1b1b 60%); color: #f2f2f2; font-size: 25px; padding: 0 34px 2px 42px; }
.menu-left { display: flex; align-items: center; gap: 43px; letter-spacing: -.05px; }
.apple { width: 24px; height: 30px; margin: -4px 2px 0 0; }
.menu-app { font-weight: 700; color: #fff; }
.menu-right { display: flex; align-items: center; }
.st { width: 34px; height: 34px; margin-right: 38.500px; flex: none; }
.st:first-child { margin-left: 0; }
.st-air { margin-right: 34.500px; }
.st-fork { margin-right: 40px; }
.st-batt { width: 54px; margin-right: 26px; }
.st-find { margin-right: 14px; }
.orange-dot { width: 9px; height: 13px; border-radius: 50%; background: #ff9f0a; margin: 0 28px 0 -26px; }
.st-siri { margin-right: 28px; }
.clock { font-size: 25px; letter-spacing: .35px; white-space: nowrap; }

/* widgets */
.widgets { position: absolute; left: 162px; top: 213px; display: grid; grid-template-columns: 687px 327px; grid-auto-rows: auto; gap: 33px; color: #fff; }
.widget { background: #3b3b3b; border-radius: 44px; }
.weather { height: 327px; padding: 26px 32px; }
.wx-head { display: flex; justify-content: space-between; height: 117px; }
.wx-city { font-size: 30px; line-height: 36px; font-weight: 500; letter-spacing: -.2px; }
.wx-temp { font-size: 88px; line-height: 70px; margin-top: 9px; font-weight: 300; letter-spacing: -1.500px; margin-left: -2px; }
.wx-right { display: flex; flex-direction: column; align-items: flex-end; }
.wx-moon { width: 32px; height: 32px; margin-top: 6px; }
.wx-clear { font-size: 26px; line-height: 30px; margin-top: 18px; font-weight: 500; letter-spacing: -.2px; }
.wx-hl { font-size: 26px; line-height: 30px; margin-top: 1px; font-weight: 500; letter-spacing: 0; }
.wx-hours { display: flex; justify-content: space-between; margin-top: 34px; }
.wx-col { display: flex; flex-direction: column; align-items: center; }
.wx-time { font-size: 22px; line-height: 26px; font-weight: 600; color: #a8a8a8; letter-spacing: 0; white-space: nowrap; }
.wx-ico { width: 34px; height: 34px; margin: 16px 0 15px 4px; }
.wx-first .wx-ico { width: 44px; height: 40px; margin: 12px 0 13px 0; }
.wx-deg { font-size: 26px; line-height: 30px; font-weight: 600; letter-spacing: -.5px; margin-left: 6px; }

.batteries { height: 327px; padding: 24px; display: grid; grid-template-columns: 128px 128px; gap: 24px 23px; }
.ring { width: 128px; height: 128px; }
.ring-track { fill: none; stroke: #565656; stroke-width: 12; }
.ring-fill { fill: none; stroke: #fff; stroke-width: 12; stroke-linecap: round; }

.reminders { height: 687px; padding: 32px 32px 31px; }
.rem-panel { height: 100%; background: #4b4b4b; }
.rem-head { height: 88px; background: #555; padding: 0 32px; display: flex; justify-content: space-between; align-items: center; }
.rem-head strong { font-size: 32px; font-weight: 700; letter-spacing: -.6px; }
.rem-head span { font-size: 23px; font-weight: 500; }
.rem-list { list-style: none; margin: 0; padding: 0 32px; }
.rem-list li { height: 66px; display: flex; justify-content: space-between; align-items: center; font-size: 26px; letter-spacing: .5px; color: #eee; border-bottom: 2px solid #5c5c5c; }
.rem-list li:last-child { border-bottom: 0; }
.rem-list time { color: #a9a9a9; letter-spacing: .2px; }

.timing { height: 327px; padding: 32px 30px 0; align-self: start; }
.tm-head { display: flex; align-items: center; gap: 17px; height: 58px; }
.panda { width: 58px; height: 58px; }
.tm-total { font-size: 45px; letter-spacing: -1.100px; color: #eee; white-space: nowrap; }
.chart { width: 327px; height: 215px; margin: 0 0 0 -30px; }
.grid path { stroke: #606060; stroke-width: 2; fill: none; }
.grid .dash { stroke-width: 1; stroke-dasharray: 6 4; }
.bar rect { fill: #6d6d6d; }
.bar-mid rect { fill: #989898; }
.bar-hi rect { fill: #cfcfcf; }
.chart-txt text { font-family: "Inter", sans-serif; font-size: 21px; font-weight: 500; fill: #a9a9a9; letter-spacing: -.5px; }

/* browser window */
.window { position: absolute; left: 1718px; top: 102px; width: 1688px; height: 2108px; border-radius: 24px; overflow: hidden; background: #f9fbfd; display: flex; flex-direction: column; border-top: 1px solid #4a4a4a; font-family: "Roboto", "Liberation Sans", sans-serif; }
.tabstrip { height: 79px; flex: none; background: #000; display: flex; align-items: flex-start; color: #ddd; font-size: 24px; }
.lights { display: flex; gap: 16px; padding: 28px 0 0 42px; width: 204px; }
.lights i { width: 24px; height: 24px; border-radius: 50%; }
.red { background: #ff5f57; }
.amber { background: #febc2e; }
.green { background: #28c840; }
.tab { display: flex; align-items: center; height: 66px; margin-top: 7px; letter-spacing: .3px; padding-top: 2px; }
.fav { width: 32px; height: 32px; flex: none; margin-top: -2px; }
.tab-title { white-space: nowrap; overflow: hidden; margin-left: 16px; -webkit-mask-image: linear-gradient(90deg, #000 82%, transparent); mask-image: linear-gradient(90deg, #000 82%, transparent); }
.tab-plain { white-space: nowrap; margin-left: 17px; }
.tab-one { width: 299px; }
.tab-one .tab-title { width: 226px; }
.tab-sep { width: 2px; height: 32px; margin-top: 24px; background: #3a3a3a; flex: none; }
.tab-two { margin-left: 26px; width: 301px; }
.tab-active { width: 314px; background: #2e2e2e; border-radius: 20px; padding-left: 23px; color: #fff; }
.active-title { width: 177px; }
.tab-x { width: 20px; height: 20px; margin-left: 27px; margin-top: -2px; }
.tab-four { margin-left: 33px; width: 296px; }
.tab-sep-2 { margin-left: 0; }
.tab-plus { width: 24px; height: 24px; margin: 28px 0 0 25px; }
.tab-more { width: 24px; height: 16px; margin: 32px 0 0 116px; }

.navbar { height: 81px; flex: none; background: #2e2e2e; border-bottom: 3px solid #555; display: flex; align-items: center; padding: 0 0 0 14px; color: #fff; }
.nav-slot { width: 60px; display: flex; justify-content: center; }
.nav-slot svg { width: 34px; height: 34px; }
.nv { fill: none; stroke: #eee; stroke-width: 2.200; }
.nv-dim { stroke: #888; }
.nv-thin { stroke-width: 1.800; stroke: #ccc; }
.urlbar { width: 615px; height: 63px; margin-left: 16px; background: #414141; border-radius: 22px; display: flex; align-items: center; position: relative; }
.url-tune { width: 28px; height: 30px; margin-left: 18px; }
.url-text { margin-left: 31px; width: 292px; font-size: 27px; color: #aaa; white-space: nowrap; font-family: "Inter", sans-serif; letter-spacing: -.25px; }
.url-text b { font-weight: 500; color: #fff; }
.url-share { width: 26px; height: 36px; margin-left: 30px; }
.url-sep { width: 2px; height: 32px; background: #777; margin-left: 19px; }
.brave { position: relative; width: 34px; height: 40px; margin-left: 22px; }
.brave svg { width: 34px; height: 40px; }
.brave-badge { position: absolute; left: 19px; top: -9px; width: 24px; height: 24px; border-radius: 50%; background: #5a5e6b; color: #ddd; font: 500 16px/24px "Roboto", sans-serif; text-align: center; }
.url-tri { width: 36px; height: 36px; margin-left: 33px; }
.exts { display: flex; margin-left: 15px; }
.ext { width: 60px; display: flex; justify-content: center; }
.ext svg { width: 32px; height: 32px; }
.vpn { width: 109px; height: 55px; margin-left: 3px; border: 2px solid #1f1f1f; border-radius: 22px; display: flex; align-items: center; gap: 9px; padding-left: 15px; font: 500 24px "Inter", sans-serif; color: #eee; letter-spacing: -.6px; }
.vpn-dot { width: 20px; height: 20px; border-radius: 50%; background: #8e93a6; position: relative; }
.vpn-dot::after { content: ""; position: absolute; left: 4px; top: 8.500px; width: 12px; height: 3px; background: #2e2e2e; }
.burger { width: 30px; height: 26px; margin-left: 17px; }

/* docs */
.docs { position: relative; flex: 1; background: #f9fbfd; display: flex; flex-direction: column; min-height: 0; color: #1f1f1f; }
.docs-head { height: 131px; flex: none; display: flex; align-items: flex-start; padding: 33px 0 0 42px; position: relative; }
.doc-logo { width: 51px; height: 68px; }
.doc-titles { margin-left: 29px; margin-top: -9px; }
.doc-title-row { display: flex; align-items: center; height: 44px; }
.doc-name { font-size: 36px; line-height: 44px; width: 46px; color: #111; font-family: "Open Sans", sans-serif; letter-spacing: -1px; }
.ti { width: 32px; height: 32px; }
.ti-star { margin-left: 40px; }
.ti-folder { margin-left: 32px; }
.ti-cloud { width: 36px; margin-left: 30px; }
.doc-menu { display: flex; font-size: 28px; line-height: 40px; margin: 5px 0 0 2px; color: #1f1f1f; letter-spacing: .1px; }
.doc-menu span:nth-child(1) { width: 78px; }
.doc-menu span:nth-child(2) { width: 81px; }
.doc-menu span:nth-child(3) { width: 93px; }
.doc-menu span:nth-child(4) { width: 109px; }
.doc-menu span:nth-child(5) { width: 123px; }
.doc-menu span:nth-child(6) { width: 101px; }
.doc-menu span:nth-child(7) { width: 156px; }
.doc-ell { line-height: 38px; }
.doc-actions { position: absolute; right: 0; top: 0; left: 1000px; height: 123px; display: flex; align-items: center; padding-left: 124px; }
.da { width: 40px; height: 40px; }
.da-cmt { margin-left: 60px; }
.da-cam { width: 44px; height: 34px; margin-left: 66px; }
.da-arrow { width: 17px; height: 12px; margin-left: 18px; }
.share-btn { width: 82px; height: 82px; border-radius: 50%; background: #c2e7ff; margin-left: 46px; display: flex; align-items: center; justify-content: center; }
.share-btn svg { width: 38px; height: 38px; }
.avatar { width: 64px; height: 64px; border-radius: 50%; background: #bb3a0e; color: #fff; margin-left: 48px; font: 400 36px/64px "Roboto", sans-serif; text-align: center; }

.toolbar { height: 79px; margin-left: 32px; width: 1623px; flex: none; background: #eff3f8; border-radius: 40px; display: flex; align-items: center; padding-left: 19px; font-size: 28px; color: #444746; }
.toolbar svg { flex: none; }
.ts { fill: none; stroke: #444746; stroke-width: 2.500; }
.ts-thin { stroke-width: 2; }
.tb-search { width: 74px; height: 56px; background: #f2f5fa; display: flex; align-items: center; justify-content: center; border-radius: 6px; }
.tb-search svg { width: 30px; height: 30px; }
.tb-slot { width: 63.500px; display: flex; justify-content: center; padding-top: 4px; }
.tb-slot svg { width: 32px; height: 34px; }
.tb-first { margin-left: -3px; }
.tb-zoom { margin-left: 20px; width: 73px; padding-top: 6px; }
.tb-arrow { width: 18px; height: 12px; }
.tb-a1 { margin-left: 26px; }
.tb-sep { width: 2px; height: 40px; background: #c7c7c7; flex: none; }
.tb-s1 { margin-left: 25px; }
.tb-style { margin-left: 32px; width: 152px; white-space: nowrap; letter-spacing: .3px; }
.tb-a2 { margin-left: 30px; }
.tb-s2 { margin-left: 29px; }
.tb-font { margin-left: 31px; width: 132px; }
.tb-s3 { margin-left: 29px; }
.tb-minus { width: 20px; height: 20px; margin-left: 21px; }
.tb-size { width: 66px; height: 46px; margin-left: 22px; border: 2px solid #747775; border-radius: 8px; text-align: center; line-height: 44px; font-size: 26px; }
.tb-plus { width: 20px; height: 20px; margin-left: 20px; }
.tb-s4 { margin-left: 22px; }
.tb-dots { width: 8px; height: 28px; margin-left: 36px; }
.tb-mode { width: 129px; height: 52px; margin-left: 97px; background: #eef2fb; border-radius: 24px; display: flex; align-items: center; padding-left: 32px; }
.tb-mode > svg:first-child { width: 30px; height: 30px; }
.tb-a3 { margin-left: 19px; }
.tb-s5 { margin-left: 19px; }
.tb-up { width: 22px; height: 16px; margin-left: 27px; }

.hruler { width: 1688px; height: 48px; flex: none; }
.ruler-num text { font-family: "Roboto", sans-serif; font-size: 23px; fill: #555; text-anchor: middle; }
.docs-body { display: flex; height: 1657px; flex: none; }
.vruler { width: 32px; height: 1657px; flex: none; }
.outline { width: 568px; flex: none; padding: 41px 0 0 32px; }
.ol-back { width: 36px; height: 40px; margin-left: 18px; }
.ol-head { display: flex; align-items: center; justify-content: space-between; width: 428px; margin: 60px 0 0 25px; height: 40px; font-size: 28px; font-weight: 500; color: #444746; letter-spacing: .8px; }
.ol-head svg { width: 22px; height: 22px; }
.ol-tab { width: 496px; height: 80px; margin-top: 33px; background: #d3e3fd; border-radius: 40px; display: flex; align-items: center; padding-left: 42px; }
.ol-tab-ico { width: 28px; height: 34px; }
.ol-tab-name { margin-left: 24px; font-size: 28px; font-weight: 500; color: #041e49; width: 346px; }
.ol-tab-dots { width: 8px; height: 32px; }
.ol-note { margin: 16px 0 0 17px; width: 425px; font-size: 26px; line-height: 34px; font-style: italic; color: #5f6368; letter-spacing: .35px; }

.page { position: relative; width: 1056px; height: 1657px; margin-top: 32px; background: #fff; border: solid #c7c7c7; border-width: 2px 0 0 2px; padding: 190px 0 0 192px; font: 29.330px/38.900px "Liberation Sans", Arial, sans-serif; color: #000; flex: none; overflow: hidden; }
.page p { margin: 0; }
.page-list { list-style: none; margin: 0; padding: 0; }
.num { display: inline-block; width: 47px; margin-left: 48px; }
.typo { text-decoration: underline wavy #d93025 2px; text-underline-offset: 3px; }
.cursor { position: absolute; left: 468px; top: 604px; width: 24px; height: 36px; }
.docs-foot { flex: 1; }
.vscroll { position: absolute; right: 8px; top: 267px; width: 15px; height: 1182px; background: #dadce0; border-radius: 8px; }
.hscroll { position: absolute; left: 16px; top: 1923px; width: 1178px; height: 16px; background: #dadce0; border-radius: 8px; }
.collapse { position: absolute; left: 1628px; top: 1851px; width: 80px; height: 80px; border-radius: 50%; background: #fff; box-shadow: 0 1px 5px rgba(0, 0, 0, .3); display: flex; align-items: center; padding-left: 22px; }
.collapse svg { width: 14px; height: 22px; }
```
